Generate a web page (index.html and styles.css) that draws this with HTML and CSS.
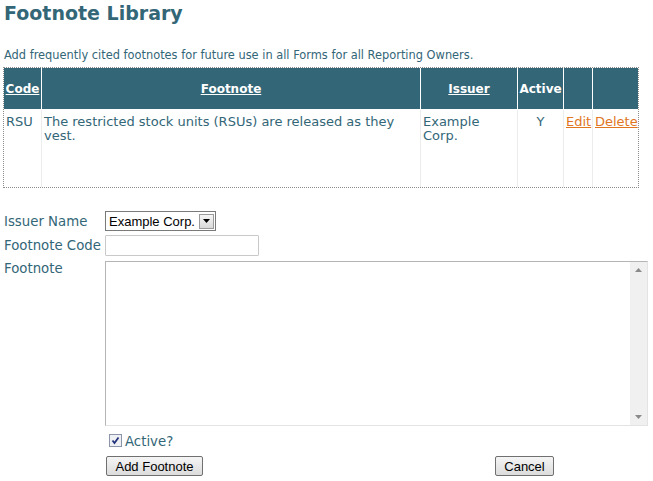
FILE: index.html
```html
<!DOCTYPE html>
<html>
<head>
<meta charset="utf-8">
<link rel="stylesheet" href="styles.css">
</head>
<body>
<div class="page">
  <h1 class="title">Footnote Library</h1>
  <p class="intro">Add frequently cited footnotes for future use in all Forms for all Reporting Owners.</p>
  <table class="grid">
    <colgroup>
      <col class="c-code"><col class="c-note"><col class="c-issuer"><col class="c-active"><col class="c-edit"><col class="c-del">
    </colgroup>
    <thead>
      <tr>
        <th><a href="#">Code</a></th>
        <th><a href="#">Footnote</a></th>
        <th><a href="#">Issuer</a></th>
        <th>Active</th>
        <th></th>
        <th></th>
      </tr>
    </thead>
    <tbody>
      <tr>
        <td>RSU</td>
        <td>The restricted stock units (RSUs) are released as they vest.</td>
        <td>Example Corp.</td>
        <td class="center">Y</td>
        <td><a class="act" href="#">Edit</a></td>
        <td><a class="act" href="#">Delete</a></td>
      </tr>
    </tbody>
  </table>

  <div class="form">
    <label class="lbl lbl-issuer">Issuer Name</label>
    <div class="field">
      <div class="select"><span class="sel-text">Example Corp.</span><span class="sel-btn"><svg width="7" height="4" viewBox="0 0 7 4"><path d="M0 0H7L3.5 4Z" fill="#000"/></svg></span></div>
    </div>
    <label class="lbl lbl-code">Footnote Code</label>
    <div class="field"><div class="input"></div></div>
    <label class="lbl lbl-note">Footnote</label>
    <div class="field">
      <div class="textarea">
        <div class="scroll">
          <svg width="7" height="4" viewBox="0 0 7 4"><path d="M3.5 0L7 4H0Z" fill="#8a8a8a"/></svg>
          <svg width="7" height="4" viewBox="0 0 7 4"><path d="M0 0H7L3.5 4Z" fill="#8a8a8a"/></svg>
        </div>
      </div>
    </div>
    <div></div>
    <div class="field check-row">
      <span class="checkbox"><svg width="9" height="9" viewBox="0 0 9 9"><path d="M1.5 4.5L3.5 7L7.5 1.5" fill="none" stroke="#22317a" stroke-width="1.8"/></svg></span>
      <span class="check-lbl">Active?</span>
    </div>
    <div></div>
    <div class="field buttons">
      <button class="btn btn-add">Add Footnote</button>
      <button class="btn btn-cancel">Cancel</button>
    </div>
  </div>
</div>
</body>
</html>
```

FILE: styles.css
```css
html, body {
  margin: 0;
  padding: 0;
  background: #ffffff;
}
body {
  font-family: "DejaVu Sans", Verdana, sans-serif;
  color: #336677;
}
.page {
  padding: 0 0 0 3px;
}
.title {
  margin: 0;
  padding: 2px 0 0 1px;
  font-size: 19px;
  font-weight: bold;
  line-height: 22px;
  color: #336677;
}
.intro {
  margin: 24px 0 0 1px;
  font-size: 11.4px;
  line-height: 14px;
}
.grid {
  margin-top: 5px;
  border-collapse: separate;
  border-spacing: 0;
  border: 1px dotted #8c8c8c;
  width: 635px;
  table-layout: fixed;
  font-size: 13px;
}
.c-code { width: 37px; }
.c-note { width: 379px; }
.c-issuer { width: 97px; }
.c-active { width: 46px; }
.c-edit { width: 29px; }
.c-del { width: 46px; }
.grid th {
  background: #336677;
  color: #ffffff;
  height: 41px;
  padding: 0 1px;
  font-weight: bold;
  font-size: 12px;
  text-align: center;
  border-left: 1px solid #ffffff;
  border-bottom: 1px solid #ffffff;
}
.grid th:first-child, .grid td:first-child {
  border-left: none;
}
.grid th a {
  color: #ffffff;
  text-decoration: underline;
}
.grid td {
  height: 72px;
  vertical-align: top;
  padding: 5px 2px 0 2px;
  line-height: 14px;
  border-left: 1px solid #ececec;
  color: #336677;
}
.grid td:nth-child(3) {
  padding-right: 8px;
}
.grid td.center { text-align: center; }
.grid td a.act {
  color: #e0761f;
  text-decoration: underline;
}
.form {
  margin-top: 23px;
  display: grid;
  grid-template-columns: 102px auto;
  row-gap: 4px;
  font-size: 13.3px;
}
.lbl {
  line-height: 19px;
  padding-left: 1px;
  padding-top: 1px;
}
.lbl-note {
  line-height: 16px;
}
.field {
  display: flex;
}
.select {
  width: 109px;
  height: 18px;
  border: 1px solid #7a7a7a;
  display: flex;
  align-items: center;
  justify-content: space-between;
  font-family: "Liberation Sans", Arial, sans-serif;
  font-size: 13px;
  color: #000;
  background: #fff;
}
.sel-text { padding-left: 3px; }
.sel-btn {
  width: 15px;
  height: 15px;
  margin-right: 1px;
  border: 1px solid #9a9a9a;
  background: linear-gradient(#f6f6f6, #d9d9d9);
  display: flex;
  align-items: center;
  justify-content: center;
  box-sizing: border-box;
}
.input {
  width: 152px;
  height: 19px;
  border: 1px solid #c9c9c9;
  border-radius: 1px;
  background: #fff;
}
.textarea {
  margin-top: 1px;
  width: 541px;
  height: 163px;
  border: 1px solid #b5b5b5;
  border-bottom-color: #e3e3e3;
  border-right-color: #e3e3e3;
  display: flex;
  justify-content: flex-end;
  background: #fff;
}
.scroll {
  width: 17px;
  background: #f0f0f0;
  display: flex;
  flex-direction: column;
  align-items: center;
  justify-content: space-between;
  padding: 6px 0 6px 0;
}
.check-row {
  align-items: center;
  padding-left: 4px;
  height: 21px;
}
.checkbox {
  width: 11px;
  height: 11px;
  border: 1px solid #8b94a8;
  background: #eef0f4;
  display: inline-flex;
  align-items: center;
  justify-content: center;
  margin-right: 3px;
}
.check-lbl {
  font-size: 13.3px;
  padding-top: 2px;
}
.buttons {
  width: 448px;
  justify-content: space-between;
  padding-left: 1px;
  margin-top: 1px;
}
.btn {
  font-family: "Liberation Sans", Arial, sans-serif;
  font-size: 13px;
  color: #000;
  height: 20px;
  padding: 0 4px;
  border: 1px solid #707070;
  border-radius: 2px;
  background: linear-gradient(#f5f5f5, #dcdcdc);
}
.btn-add { width: 97px; }
.btn-cancel { width: 59px; }
```
